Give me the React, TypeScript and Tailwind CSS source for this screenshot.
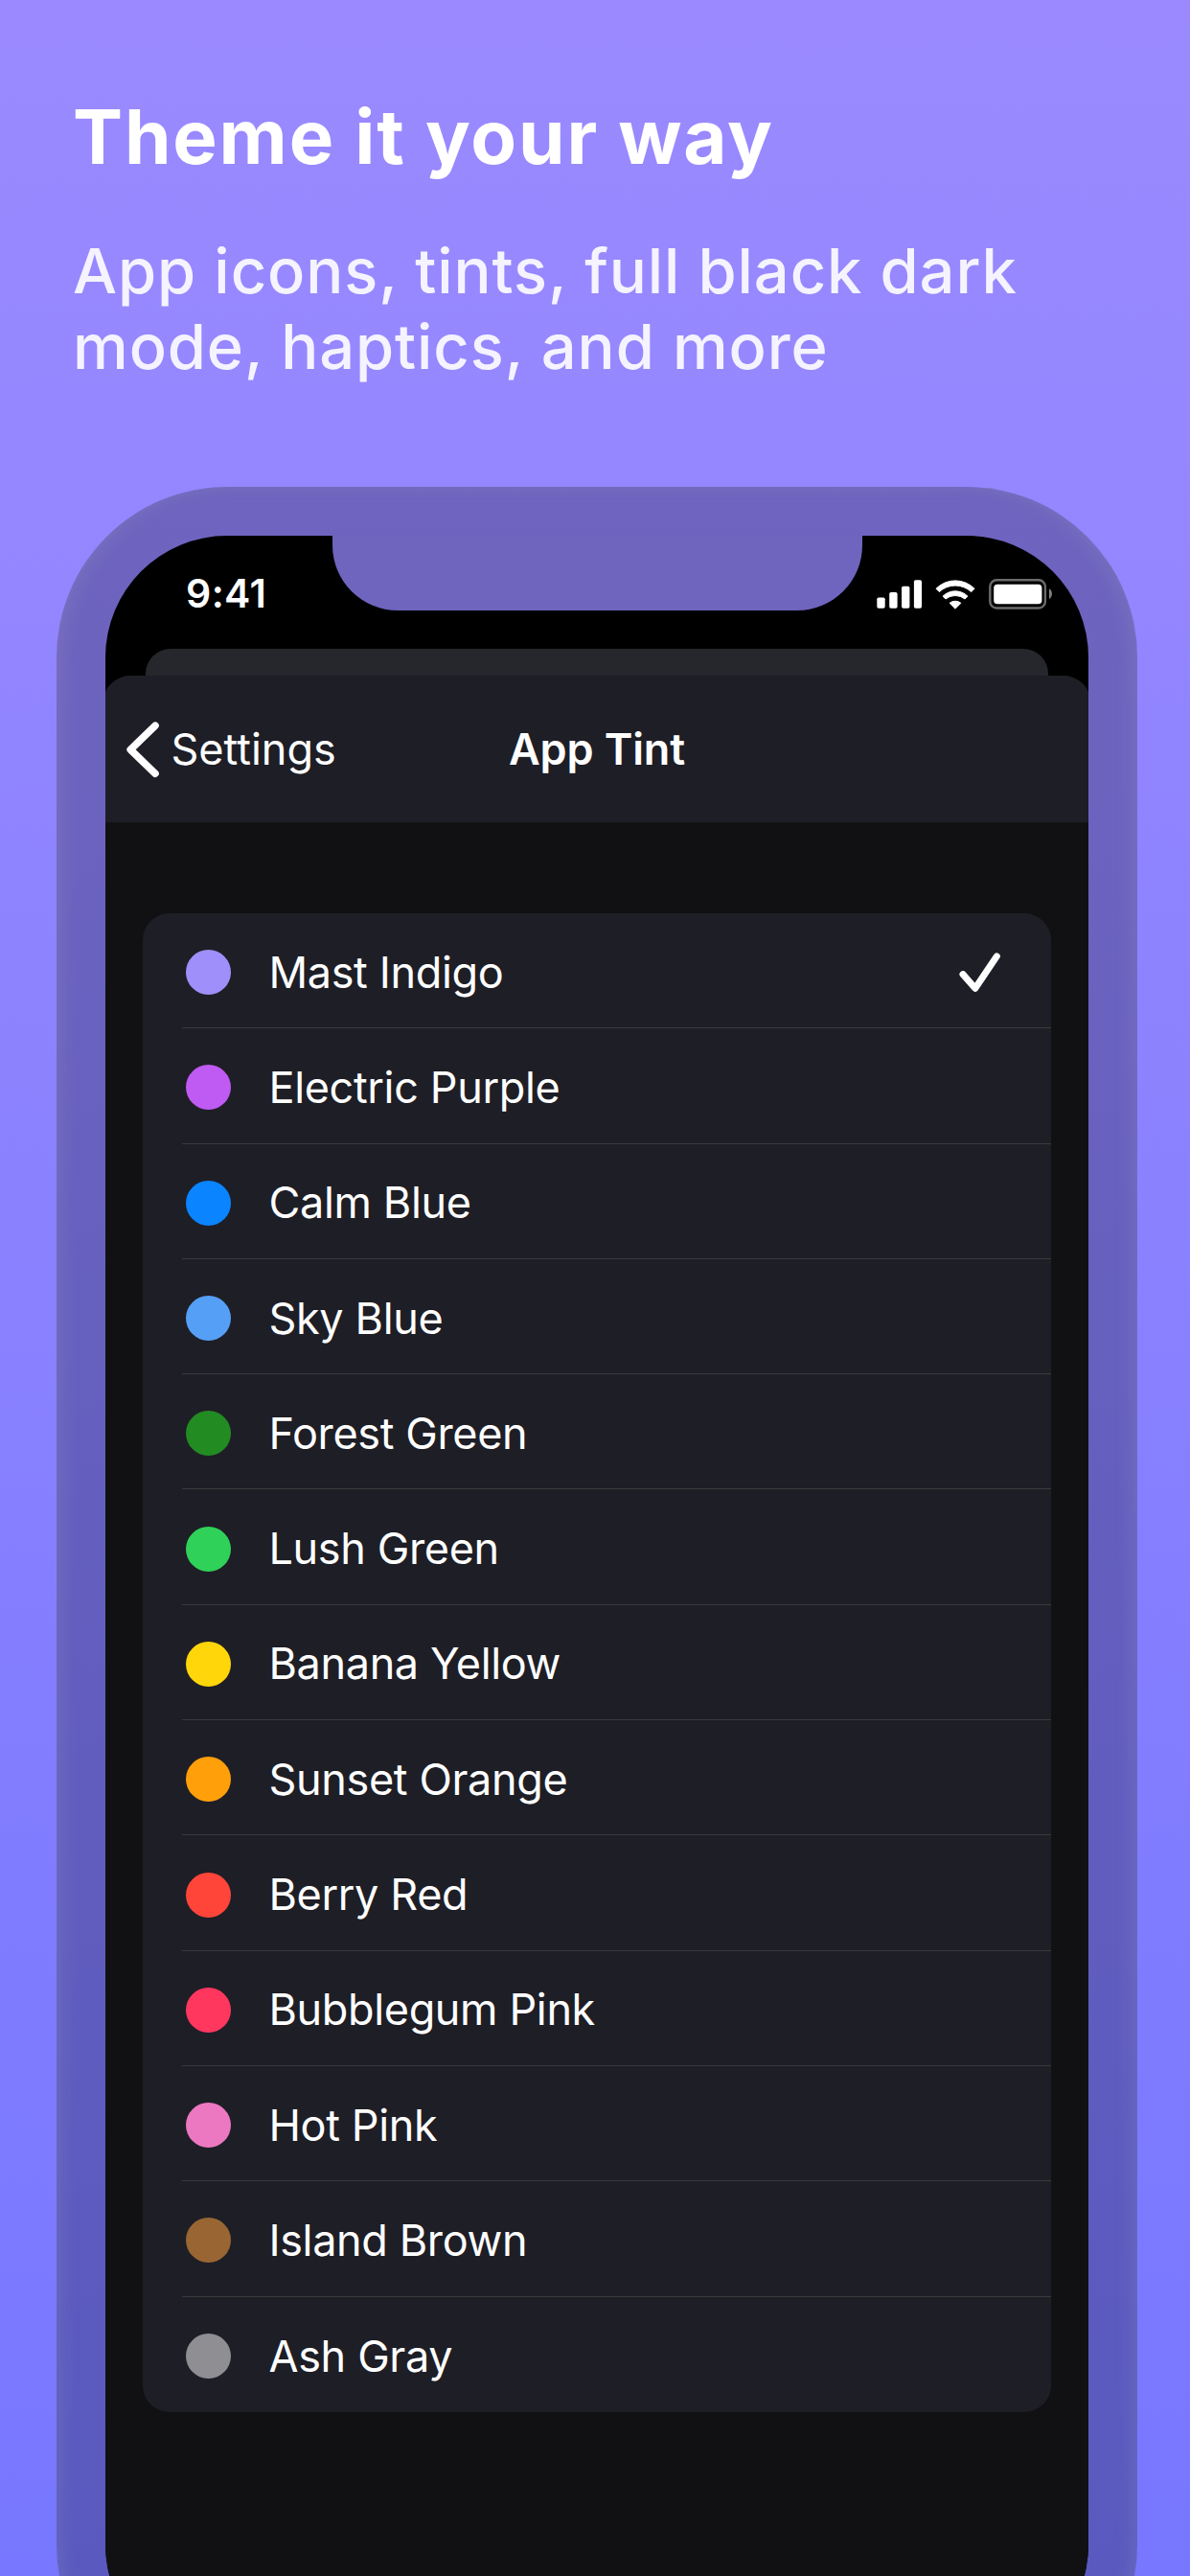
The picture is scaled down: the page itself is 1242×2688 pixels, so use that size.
const TINTS = [
  { name: 'Mast Indigo', dot: 'bg-[#9e8ffa]' },
  { name: 'Electric Purple', dot: 'bg-[#bf5af2]' },
  { name: 'Calm Blue', dot: 'bg-[#0a84ff]' },
  { name: 'Sky Blue', dot: 'bg-[#55a0f6]' },
  { name: 'Forest Green', dot: 'bg-[#228b22]' },
  { name: 'Lush Green', dot: 'bg-[#30d158]' },
  { name: 'Banana Yellow', dot: 'bg-[#ffd60a]' },
  { name: 'Sunset Orange', dot: 'bg-[#ff9f0a]' },
  { name: 'Berry Red', dot: 'bg-[#ff453a]' },
  { name: 'Bubblegum Pink', dot: 'bg-[#ff375f]' },
  { name: 'Hot Pink', dot: 'bg-[#ec78c1]' },
  { name: 'Island Brown', dot: 'bg-[#996633]' },
  { name: 'Ash Gray', dot: 'bg-[#8e8e93]' },
];

function SignalIcon() {
  return (
    <svg width="47" height="30" viewBox="0 0 47 30" fill="#fff">
      <rect x="0.3" y="18.5" width="8.4" height="11.3" rx="1.8" />
      <rect x="13.2" y="13" width="8.4" height="16.8" rx="1.8" />
      <rect x="26" y="6.8" width="8.4" height="23" rx="1.8" />
      <rect x="38.9" y="0.2" width="8.1" height="29.6" rx="1.8" />
    </svg>
  );
}

function WifiIcon() {
  return (
    <svg width="44" height="33" viewBox="0 0 44 33" fill="#fff" stroke="#fff" strokeWidth="1" strokeLinejoin="round">
      <path d="M2 10.3 A28 28 0 0 1 42 10.3 L38.7 13.6 A24.5 24.5 0 0 0 5.3 13.6 Z" />
      <path d="M9 18.2 A18.5 18.5 0 0 1 35 18.2 L32 21 A16 16 0 0 0 12 21 Z" />
      <path d="M16.1 25.3 A9.5 9.5 0 0 1 27.9 25.3 L22 31.2 Z" />
    </svg>
  );
}

function BatteryIcon() {
  return (
    <svg width="68" height="32" viewBox="0 0 68 32">
      <rect x="1.3" y="1.3" width="57.6" height="29.2" rx="6.8" fill="none" stroke="#6b6b6b" strokeWidth="2.4" />
      <rect x="5.2" y="5.7" width="50.2" height="20.6" rx="3.8" fill="#fff" />
      <path d="M63 10.2 A6.6 6.6 0 0 1 63 21.2 Z" fill="#808080" />
    </svg>
  );
}

function StatusBar() {
  return (
    <div className="flex h-[118px] shrink-0 justify-between">
      <div className="w-[237px] pt-[35px] pl-[84px]">
        <div className="text-[41px] leading-[51px] font-semibold tracking-[0.4px] text-white">9:41</div>
      </div>
      <div className="h-[78px] w-[553px] rounded-b-[68px] bg-[#6f65be]" />
      <div className="flex w-[236px] items-start pt-[45px] pl-[15px]">
        <div className="pt-px">
          <SignalIcon />
        </div>
        <div className="pl-[13px]">
          <WifiIcon />
        </div>
        <div className="pl-[13px]">
          <BatteryIcon />
        </div>
      </div>
    </div>
  );
}

function NavBar() {
  return (
    <div className="grid h-[153px] shrink-0 grid-cols-[1fr_auto_1fr] items-center bg-[#1e1e26] text-[45px] leading-[56px] text-white">
      <div className="flex items-center pl-[20px]">
        <svg width="38" height="60" viewBox="0 0 38 60" fill="none" stroke="#fff" strokeWidth="7.6" strokeLinecap="round" strokeLinejoin="round">
          <path d="M32 5.2 L6.2 30.2 L32 55.2" />
        </svg>
        <span className="pl-[10.5px] font-normal">Settings</span>
      </div>
      <div className="font-semibold tracking-[-0.14px]">App Tint</div>
      <div />
    </div>
  );
}

function TintRow({ name, dot, selected, last }: { name: string; dot: string; selected: boolean; last: boolean }) {
  return (
    <li className="flex h-[120.3px] pl-[41px]">
      <div className={`flex flex-1 items-center pt-[4px] pl-[4px] ${last ? '' : 'border-b border-[#39393d]'}`}>
        <span className={`size-[47px] shrink-0 rounded-full ${dot}`} />
        <span className="flex-1 pl-[39.5px] text-[45px] leading-[56px] tracking-[-0.36px] text-white">{name}</span>
        {selected && (
          <svg className="mr-[52px]" width="44" height="44" viewBox="0 0 44 44" fill="none" stroke="#fff" strokeWidth="7" strokeLinecap="round" strokeLinejoin="round">
            <path d="M4 23.6 L16.8 38.3 L39.3 4.9" />
          </svg>
        )}
      </div>
    </li>
  );
}

export default function App() {
  return (
    <main className="h-[2688px] w-[1242px] overflow-hidden bg-linear-to-b from-[#9b8aff] to-[#7777ff] font-['Inter','Liberation_Sans',sans-serif]">
      <header className="h-[508px] pt-[96px] pl-[76px]">
        <h1 className="text-[78px] leading-[94px] font-bold tracking-[1.84px] text-white">Theme it your way</h1>
        <p className="mt-[53px] text-[65px] leading-[79px] font-[450] tracking-[0.9px] text-white/90">
          App icons, tints, full black dark
          <br />
          mode, haptics, and more
        </p>
      </header>
      <div className="ml-[59px] h-[2325px] w-[1128px] rounded-[178px] bg-black/25 p-[51px] shadow-[inset_10px_0_20px_-6px_rgba(190,190,190,0.16),inset_-10px_0_20px_-6px_rgba(190,190,190,0.16)]">
        <div className="flex h-full flex-col overflow-hidden rounded-[127px] bg-black">
          <StatusBar />
          <div className="mx-[42px] h-[28px] shrink-0 rounded-t-[26px] bg-[#26272c]" />
          <div className="-mx-[3px] flex flex-1 flex-col overflow-hidden rounded-t-[30px] bg-[#111114] px-[3px]">
            <div className="-mx-[3px] bg-[#1e1e26] px-[3px]">
              <NavBar />
            </div>
            <ul className="mt-[95px] mr-[39px] ml-[39px] rounded-[28px] bg-[#1e1e26]">
              {TINTS.map((tint, i) => (
                <TintRow key={tint.name} name={tint.name} dot={tint.dot} selected={i === 0} last={i === TINTS.length - 1} />
              ))}
            </ul>
          </div>
        </div>
      </div>
    </main>
  );
}
